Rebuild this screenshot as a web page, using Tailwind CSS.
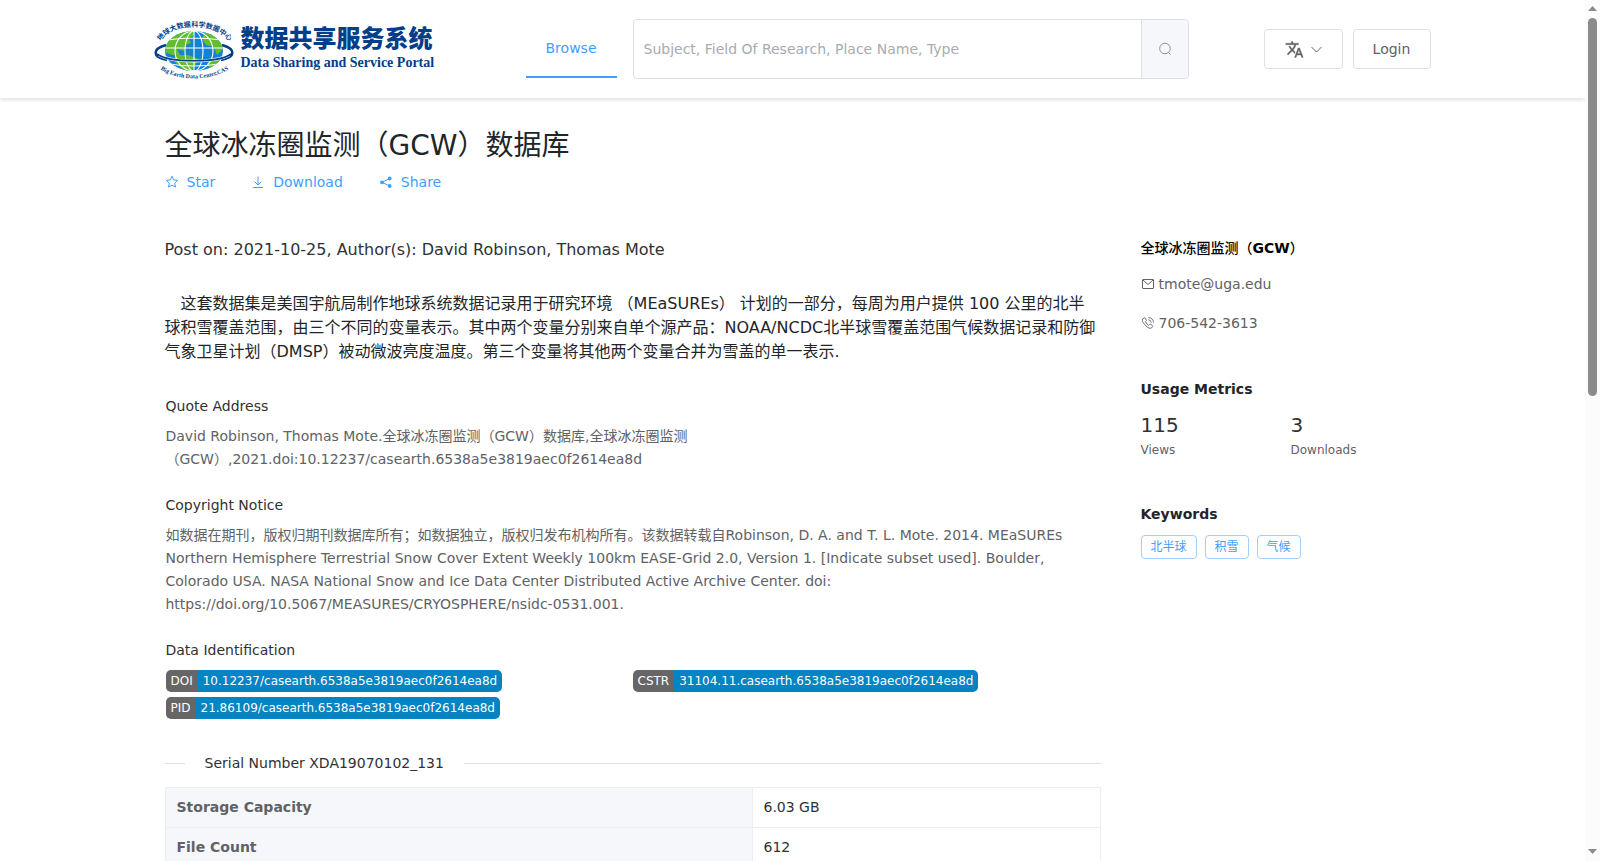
<!DOCTYPE html>
<html lang="zh-CN">
<head>
  <meta charset="utf-8">
  <meta name="viewport" content="width=device-width, initial-scale=1">
  <title>全球冰冻圈监测（GCW）数据库</title>
  <script src="https://cdn.jsdelivr.net/npm/@tailwindcss/browser@4"></script>
</head>
<body class="h-screen flex overflow-hidden bg-white text-sm text-[#606266] font-['DejaVu_Sans','Noto_Sans_CJK_SC',sans-serif]">
  <div class="flex-1 min-w-0 overflow-hidden">
    <header class="bg-white shadow-[0_2px_4px_rgba(0,0,0,0.12)]">
      <div class="max-w-[1276px] h-[98px] mx-auto flex items-center">
        <a href="#" class="flex items-center text-[#023e8a]">
          <svg class="w-[78px] h-[66px] shrink-0 overflow-visible" viewBox="0 0 78 66">
            <defs>
              <clipPath id="globe"><ellipse cx="39" cy="35" rx="29" ry="20"/></clipPath>
              <path id="arc-top" d="M4 28 C14 5 62 5 76 28"/>
              <path id="arc-bottom" d="M5 53 C22 65 54 66 74 53"/>
            </defs>
            <path d="M11 29 C-3 33 -3 41 12 44 M67 29 C81 33 81 41 66 44" fill="none" stroke="#023e8a" stroke-width="2.5"/>
            <ellipse cx="39" cy="35" rx="29" ry="20" fill="#1583d0"/>
            <g clip-path="url(#globe)">
              <path d="M10 36 L12 25 L24 14 L40 14 L38 20 L34 22 L36 27 L31 29 L29 35 L22 33 L25 39 L17 39 Z" fill="#62bd2f"/>
              <path d="M20 39 L33 39 L44 43 L40 49 L36 56 L28 54 L20 46 Z" fill="#62bd2f"/>
              <path d="M50 15 L60 18 L69 32 L62 39 L59 31 L51 29 L47 23 Z" fill="#62bd2f"/>
              <path d="M52 47 L60 43 L66 44 L55 53 Z" fill="#62bd2f"/>
              <g fill="none" stroke="#fff" stroke-width="1.100">
                <ellipse cx="39" cy="35" rx="9" ry="20"/>
                <ellipse cx="39" cy="35" rx="19" ry="20"/>
                <path d="M39 14V56 M12 24Q39 20 66 24 M9 32H69 M14 48Q39 52 64 48"/>
              </g>
            </g>
            <path d="M4 39 C18 47 60 47 74 39" fill="none" stroke="#fff" stroke-width="3"/>
            <path d="M2 38 C14 47 64 47 76 38" fill="none" stroke="#023e8a" stroke-width="1.600"/>
            <text text-anchor="middle" class="text-[7px] font-bold font-['Noto_Sans_CJK_SC',sans-serif]" fill="#023e8a"><textPath href="#arc-top" startOffset="50%">地球大数据科学数据中心</textPath></text>
            <text text-anchor="middle" class="text-[6px] font-bold font-['Liberation_Serif',serif]" fill="#023e8a"><textPath href="#arc-bottom" startOffset="50%">Big Earth Data Center,CAS</textPath></text>
          </svg>
          <span class="ml-2 flex flex-col whitespace-nowrap">
            <span class="text-2xl leading-7 font-black font-['Noto_Sans_CJK_SC',sans-serif]">数据共享服务系统</span>
            <span class="text-sm leading-6 font-bold font-['Liberation_Serif',serif]">Data Sharing and Service Portal</span>
          </span>
        </a>
        <nav class="ml-auto mr-4">
          <a href="#" class="block px-5 h-[58px] leading-[56px] border-b-2 border-[#409eff] text-[#409eff]">Browse</a>
        </nav>
        <form class="flex w-[556px] h-[60px] border border-[#dcdfe6] rounded">
          <input type="text" aria-label="Search" placeholder="Subject, Field Of Research, Place Name, Type" class="flex-1 min-w-0 px-[10px] rounded-l outline-none placeholder:text-[#a8abb2]">
          <button type="button" aria-label="Search" class="w-[47px] flex items-center justify-center bg-[#f5f7fa] border-l border-[#dcdfe6] rounded-r text-[#909399]">
            <svg class="size-[14px]" viewBox="0 0 14 14" fill="none" stroke="currentColor"><circle cx="7" cy="6.500" r="5.300"/><path d="M10.500 10.500l2 2"/></svg>
          </button>
        </form>
        <div class="flex gap-[10px] ml-[75px]">
          <button type="button" aria-label="Language" class="w-[79px] h-10 flex items-center justify-center gap-[7px] border border-[#dcdfe6] rounded">
            <svg class="size-[19px]" viewBox="0 0 24 24" fill="currentColor" stroke="currentColor" stroke-width=".4"><path d="M12.870 15.070l-2.540-2.510.03-.03c1.740-1.940 2.980-4.170 3.710-6.530H17V4h-7V2H8v2H1v1.990h11.170C11.500 7.920 10.440 9.750 9 11.350 8.070 10.320 7.300 9.190 6.690 8h-2c.73 1.630 1.730 3.170 2.980 4.560l-5.090 5.020L4 19l5-5 3.110 3.110.76-2.040zM18.500 10h-2L12 22h2l1.120-3h4.750L21 22h2l-4.500-12zm-2.620 7l1.620-4.330L19.120 17h-3.240z"/></svg>
            <svg class="w-[11px] h-[7px]" viewBox="0 0 11 7" fill="none" stroke="currentColor"><path d="M.5 1l5 5 5-5"/></svg>
          </button>
          <button type="button" class="w-[78px] h-10 border border-[#dcdfe6] rounded">Login</button>
        </div>
      </div>
    </header>

    <div class="max-w-[1256px] mx-auto pt-7">
      <h1 class="text-[28px] leading-10 text-[#212529]">全球冰冻圈监测（GCW）数据库</h1>
      <div class="flex gap-9 mt-[6px] leading-5 text-[#409eff]">
        <a href="#" class="flex items-center gap-2">
          <svg class="size-[14px]" viewBox="0 0 14 14" fill="none" stroke="currentColor" stroke-linejoin="round"><path d="M7 1.200l1.700 3.700 4 .5-3 2.700.8 4L7 10.100l-3.500 2 .8-4-3-2.700 4-.5z"/></svg>
          Star
        </a>
        <a href="#" class="flex items-center gap-2">
          <svg class="size-[14px]" viewBox="0 0 14 14" fill="none" stroke="currentColor"><path d="M7 1.500v8M3.500 6.500L7 10l3.500-3.500M2 12.500h10"/></svg>
          Download
        </a>
        <a href="#" class="flex items-center gap-2">
          <svg class="size-[14px]" viewBox="0 0 14 14" fill="currentColor"><circle cx="3" cy="7.300" r="1.900"/><circle cx="10.700" cy="3.500" r="1.900"/><circle cx="10.700" cy="11" r="1.900"/><path d="M10.700 3.500L3 7.300l7.700 3.700" fill="none" stroke="currentColor"/></svg>
          Share
        </a>
      </div>

      <div class="flex gap-10 mt-[45px]">
        <main class="flex-1 min-w-0">
          <p class="pt-px text-base text-[#303133]">Post on: 2021-10-25, Author(s): David Robinson, Thomas Mote</p>
          <p class="mt-[30px] text-base indent-4 text-[#212529]">这套数据集是美国宇航局制作地球系统数据记录用于研究环境 （MEaSUREs） 计划的一部分，每周为用户提供 100 公里的北半球积雪覆盖范围，由三个不同的变量表示。其中两个变量分别来自单个源产品：NOAA/NCDC北半球雪覆盖范围气候数据记录和防御气象卫星计划（DMSP）被动微波亮度温度。第三个变量将其他两个变量合并为雪盖的单一表示.</p>

          <div class="mt-8 px-px flex flex-col gap-6">
            <section>
              <h2 class="leading-5 text-[#303133]">Quote Address</h2>
              <p class="mt-[9px] leading-[23px]">David Robinson, Thomas Mote.全球冰冻圈监测（GCW）数据库,全球冰冻圈监测（GCW）,2021.doi:10.12237/casearth.6538a5e3819aec0f2614ea8d</p>
            </section>
            <section>
              <h2 class="leading-5 text-[#303133]">Copyright Notice</h2>
              <p class="mt-[9px] leading-[23px]">如数据在期刊，版权归期刊数据库所有；如数据独立，版权归发布机构所有。该数据转载自Robinson, D. A. and T. L. Mote. 2014. MEaSUREs Northern Hemisphere Terrestrial Snow Cover Extent Weekly 100km EASE-Grid 2.0, Version 1. [Indicate subset used]. Boulder, Colorado USA. NASA National Snow and Ice Data Center Distributed Active Archive Center. doi: https://doi.org/10.5067/MEASURES/CRYOSPHERE/nsidc-0531.001.</p>
            </section>
            <section>
              <h2 class="leading-5 text-[#303133]">Data Identification</h2>
              <div class="mt-[10px] grid grid-cols-2 gap-y-[5px] justify-items-start text-xs leading-[22px] text-white">
                <a href="#" class="flex rounded-[5px] overflow-hidden"><span class="px-[5px] bg-[#666]">DOI</span><span class="px-[5px] bg-[#0484c2]">10.12237/casearth.6538a5e3819aec0f2614ea8d</span></a>
                <a href="#" class="flex rounded-[5px] overflow-hidden"><span class="px-[5px] bg-[#666]">CSTR</span><span class="px-[5px] bg-[#0484c2]">31104.11.casearth.6538a5e3819aec0f2614ea8d</span></a>
                <a href="#" class="flex rounded-[5px] overflow-hidden"><span class="px-[5px] bg-[#666]">PID</span><span class="px-[5px] bg-[#0484c2]">21.86109/casearth.6538a5e3819aec0f2614ea8d</span></a>
              </div>
            </section>
          </div>

          <div class="mt-[34px] flex items-center gap-5 leading-5 text-[#303133]">
            <span class="w-5 h-px bg-[#dcdfe6]"></span>
            <h2>Serial Number XDA19070102_131</h2>
            <span class="flex-1 h-px bg-[#dcdfe6]"></span>
          </div>
          <table class="mt-[14px] w-full table-fixed border-collapse text-left leading-[22px] text-[#303133]">
            <tr>
              <th scope="row" class="w-[587px] px-[11px] pt-2 pb-[9px] border border-[#ebeef5] bg-[#f5f7fa] font-bold text-[#606266]">Storage Capacity</th>
              <td class="px-[11px] pt-2 pb-[9px] border border-[#ebeef5]">6.03 GB</td>
            </tr>
            <tr>
              <th scope="row" class="px-[11px] pt-2 pb-[9px] border border-[#ebeef5] bg-[#f5f7fa] font-bold text-[#606266]">File Count</th>
              <td class="px-[11px] pt-2 pb-[9px] border border-[#ebeef5]">612</td>
            </tr>
          </table>
        </main>

        <aside class="w-[280px] shrink-0">
          <h2 class="leading-[22px] font-bold text-black"><span class="font-medium">全球冰冻圈监测（</span>GCW<span class="font-medium">）</span></h2>
          <p class="mt-[15px] flex items-center gap-1 leading-5">
            <svg class="size-[14px]" viewBox="0 0 14 14" fill="none" stroke="currentColor"><rect x="1.500" y="2.500" width="11" height="9" rx=".5"/><path d="M2 3l5 4.500L12 3"/></svg>
            tmote@uga.edu
          </p>
          <p class="mt-[19px] flex items-center gap-1 leading-5">
            <svg class="size-[14px]" viewBox="0 0 14 14" fill="none" stroke="currentColor" stroke-width=".9"><path d="M1.600 3.200l1.300-1.300q.6-.4 1 .1l1.400 2q.3.5-.1.900l-.8.9q.9 2 3.300 3.500l.9-.9q.5-.4 1 0l1.900 1.300q.5.4.1.9l-1.300 1.500q-1.500.7-3.500-.6Q3.200 8.700 1.500 5.500 1 4 1.600 3.200zM7.500 3.800q2.300.2 2.700 2.700M7.500 1.500q4.600.4 5 5"/></svg>
            706-542-3613
          </p>

          <h2 class="mt-[46px] leading-5 font-bold text-[#212529]">Usage Metrics</h2>
          <dl class="mt-[14px] flex">
            <div class="w-[150px] flex flex-col-reverse gap-[5px]"><dt class="text-xs">Views</dt><dd class="text-xl leading-6 text-[#303133]">115</dd></div>
            <div class="flex flex-col-reverse gap-[5px]"><dt class="text-xs">Downloads</dt><dd class="text-xl leading-6 text-[#303133]">3</dd></div>
          </dl>

          <h2 class="mt-[46px] leading-5 font-bold text-[#212529]">Keywords</h2>
          <div class="mt-[11px] flex gap-2 text-xs leading-[22px] text-[#409eff]">
            <span class="px-[9px] border border-[#a0cfff] rounded">北半球</span>
            <span class="px-[9px] border border-[#a0cfff] rounded">积雪</span>
            <span class="px-[9px] border border-[#a0cfff] rounded">气候</span>
          </div>
        </aside>
      </div>
    </div>
  </div>

  <!-- Scroll track -->
  <div class="w-[15px] shrink-0 flex flex-col items-center justify-between pt-[6px] pb-[7px] bg-[#fcfcfc] text-[#8b8b8b]">
    <div class="flex flex-col items-center gap-[7px] h-[46%]">
      <svg class="w-[9px] h-[5px] shrink-0" viewBox="0 0 9 5" fill="currentColor"><path d="M4.500 0L9 5H0z"/></svg>
      <span class="flex-1 w-[9px] rounded-full bg-[#8b8b8b]"></span>
    </div>
    <svg class="w-[9px] h-[5px]" viewBox="0 0 9 5" fill="currentColor"><path d="M0 0h9L4.500 5z"/></svg>
  </div>
</body>
</html>
